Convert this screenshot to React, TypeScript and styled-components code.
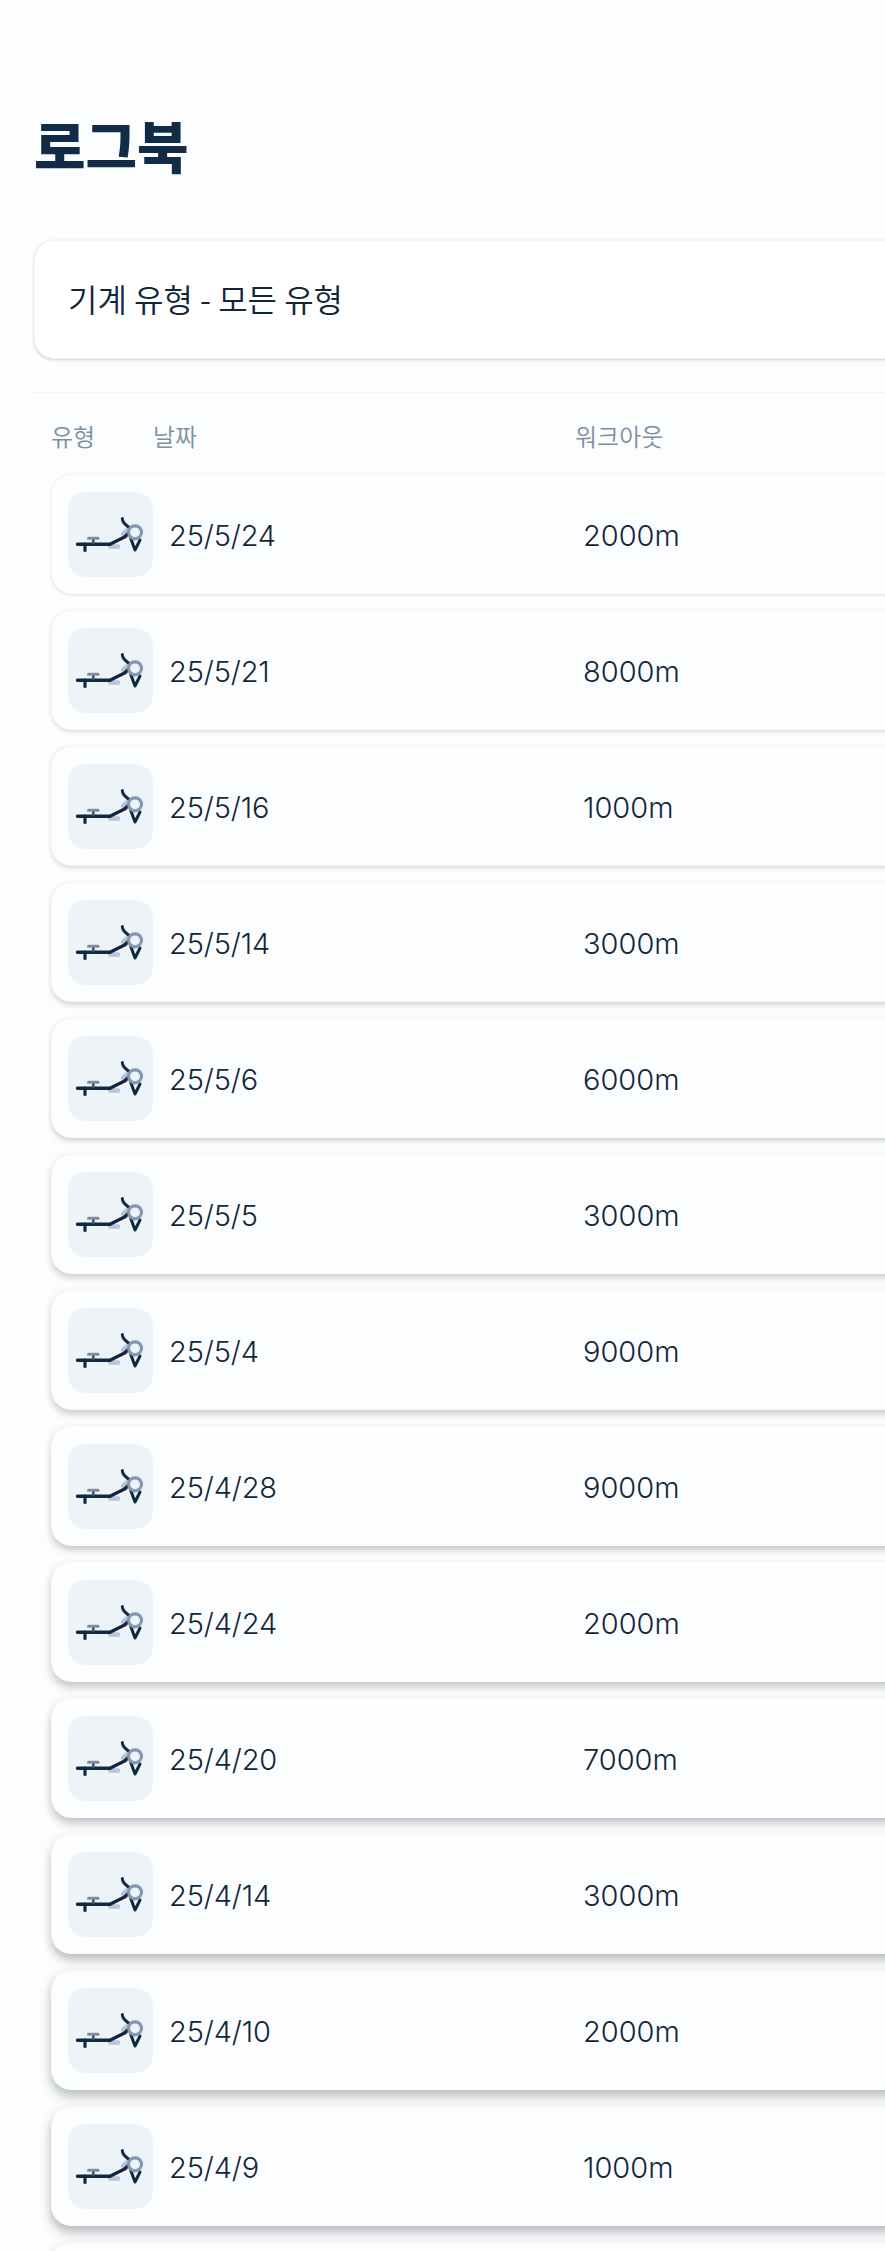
import styled, { createGlobalStyle } from "styled-components"

const GlobalStyle = createGlobalStyle`
    html, body {
        margin: 0;
        padding: 0;
        background: #fbfdfe;
        overflow: hidden;
    }
    body {
        font-family: "Inter", "Noto Sans CJK KR", sans-serif;
        color: #12263a;
    }
`

type Workout = {
    date: string
    distance: string
}

const workouts: Workout[] = [
    { date: "25/5/24", distance: "2000m" },
    { date: "25/5/21", distance: "8000m" },
    { date: "25/5/16", distance: "1000m" },
    { date: "25/5/14", distance: "3000m" },
    { date: "25/5/6", distance: "6000m" },
    { date: "25/5/5", distance: "3000m" },
    { date: "25/5/4", distance: "9000m" },
    { date: "25/4/28", distance: "9000m" },
    { date: "25/4/24", distance: "2000m" },
    { date: "25/4/20", distance: "7000m" },
    { date: "25/4/14", distance: "3000m" },
    { date: "25/4/10", distance: "2000m" },
    { date: "25/4/9", distance: "1000m" },
]

const Page = styled.div`
    width: 1200px;
    height: 2251px;
    padding: 112px 0 0 34px;
    box-sizing: border-box;
    overflow: hidden;
`
const Title = styled.h1`
    margin: 0 0 64px;
    font-size: 56px;
    line-height: 64px;
    font-weight: 900;
    color: #122b46;
    font-family: "Noto Sans CJK KR", sans-serif;
`
const Filter = styled.div`
    display: flex;
    align-items: center;
    height: 119px;
    box-sizing: border-box;
    padding: 0 0 3px 33px;
    background: #ffffff;
    border-radius: 20px;
    border: 1px solid #f3f5f7;
    box-shadow: 0 1px 3px rgba(30, 40, 50, 0.22);
    font-family: "Noto Sans CJK KR", sans-serif;
    font-size: 32px;
    font-weight: 350;
`
const Divider = styled.div`
    height: 1px;
    margin-top: 33px;
    background: #f1f3f6;
`
const HeaderRow = styled.div`
    display: flex;
    padding: 27px 0 22px 17px;
    font-family: "Noto Sans CJK KR", sans-serif;
    font-size: 24px;
    line-height: 32px;
    font-weight: 350;
    color: #7c8f9f;
`
const HeaderCell = styled.div<{ $width: number }>`
    width: ${props => props.$width}px;
`
const List = styled.div`
    display: flex;
    flex-direction: column;
    gap: 16px;
    padding-left: 17px;
`
const Row = styled.div<{ $shadow: number }>`
    display: flex;
    align-items: center;
    height: 120px;
    padding-left: 16px;
    box-sizing: border-box;
    flex-shrink: 0;
    background: #fcfdfe;
    border: 1px solid #f6f8fa;
    border-radius: 20px;
    box-shadow: 0 ${props => 1 + props.$shadow * 5}px ${props => 3 + props.$shadow * 8}px
        rgba(30, 35, 40, ${props => 0.12 + props.$shadow * 0.2});
`
const IconTile = styled.div`
    display: flex;
    flex-shrink: 0;
    width: 85px;
    height: 85px;
    border-radius: 18px;
    background: #eef3f7;
`
const DateCell = styled.div`
    width: 414px;
    margin-left: 16px;
    padding-top: 2px;
    font-size: 29px;
    font-weight: 300;
    letter-spacing: -0.15px;
`
const DistanceCell = styled.div`
    padding-top: 2px;
    font-size: 29px;
    font-weight: 300;
`

function RowerIcon() {
    return (
        <svg width="85" height="85" viewBox="0 0 85 85" fill="none">
            <path d="M42 54.500h8" stroke="#b5c6d8" strokeWidth="4.500" strokeLinecap="round" />
            <path d="M56 42l4-3" stroke="#b5c6d8" strokeWidth="6" strokeLinecap="round" />
            <path d="M9.500 52.300H42l15-7.600 6.700-6.700" stroke="#12283f" strokeWidth="3.400" strokeLinecap="round" strokeLinejoin="round" />
            <path d="M17 52v6.500" stroke="#12283f" strokeWidth="3.200" strokeLinecap="round" />
            <path d="M25.300 46.500v6" stroke="#3c4f63" strokeWidth="2.500" />
            <path d="M20.500 46.300h9.500" stroke="#7d8ea3" strokeWidth="3" strokeLinecap="round" />
            <path d="M54.300 26.500c0 5 4 6.500 8 10" stroke="#12283f" strokeWidth="3" strokeLinecap="round" />
            <path d="M62.700 46.300L67 58l5-10" stroke="#12283f" strokeWidth="3" strokeLinejoin="round" strokeLinecap="round" />
            <circle cx="67" cy="40.300" r="6.500" fill="#edf2f7" stroke="#8496ad" strokeWidth="3.200" />
        </svg>
    )
}

export default function App(): JSX.Element {
    return (
        <Page>
            <GlobalStyle />
            <Title>로그북</Title>
            <Filter>기계 유형 - 모든 유형</Filter>
            <Divider />
            <HeaderRow>
                <HeaderCell $width={102}>유형</HeaderCell>
                <HeaderCell $width={422}>날짜</HeaderCell>
                <HeaderCell $width={200}>워크아웃</HeaderCell>
            </HeaderRow>
            <List>
                {workouts.map((workout, index) => (
                    <Row key={index} $shadow={index / (workouts.length - 1)}>
                        <IconTile>
                            <RowerIcon />
                        </IconTile>
                        <DateCell>{workout.date}</DateCell>
                        <DistanceCell>{workout.distance}</DistanceCell>
                    </Row>
                ))}
                <Row $shadow={1} />
            </List>
        </Page>
    )
}
